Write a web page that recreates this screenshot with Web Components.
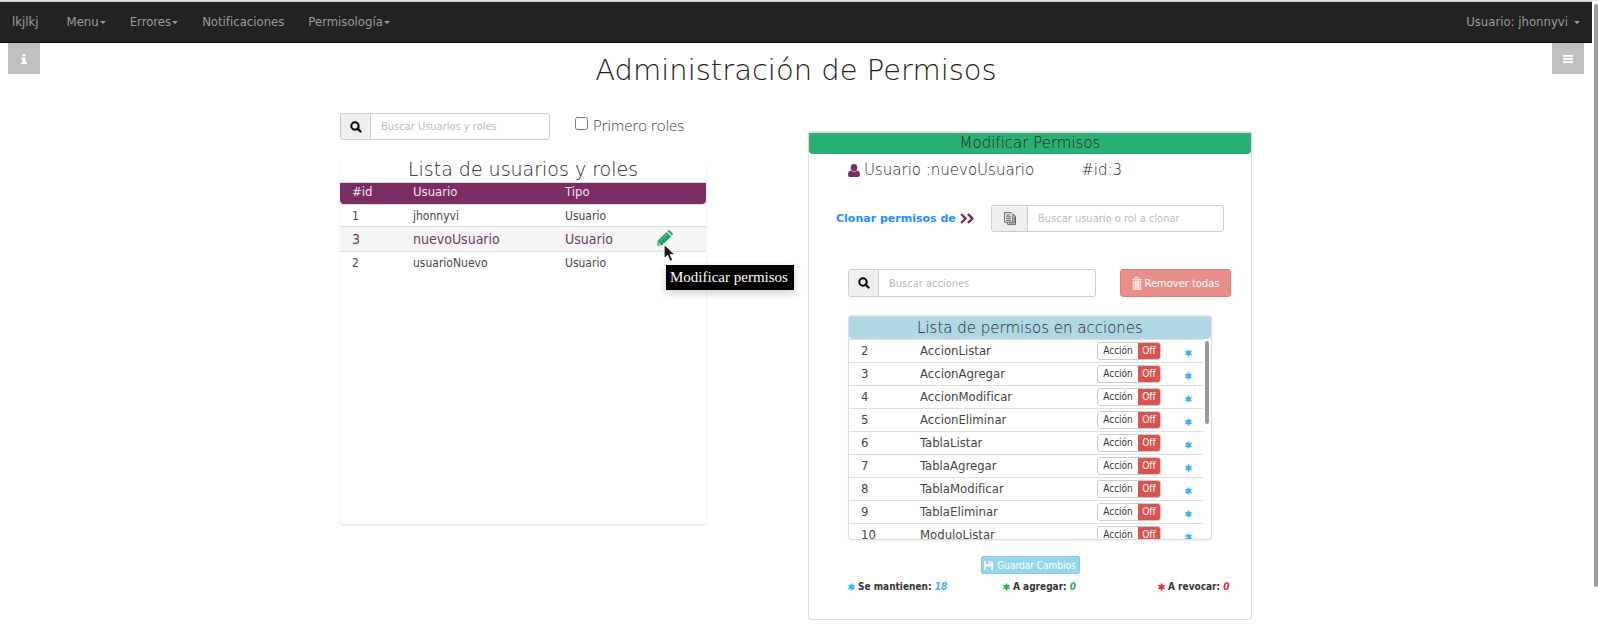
<!DOCTYPE html>
<html lang="es">
<head>
<meta charset="utf-8">
<title>Administración de Permisos</title>
<style>
html, body { margin: 0; }
body { font: 13px/20px "DejaVu Sans Condensed", "DejaVu Sans", sans-serif; color: #444; background: #fff; }
</style>
</head>
<body>
<permisos-app></permisos-app>
<script>
const ICONS = {
  search: '<svg viewBox="0 0 12 12" width="12" height="12"><circle cx="5" cy="5" r="3.7" fill="none" stroke="currentColor" stroke-width="2"/><path d="M7.6 7.6 10.500 10.500" stroke="currentColor" stroke-width="2.4" stroke-linecap="round"/></svg>',
  info: '<svg viewBox="0 0 6 10" width="6" height="10"><path d="M1.5 0h3v2.2h-3zM.5 3.6h4v4.6H6V10H0V8.200h1.500V5.400H.5z" fill="currentColor"/></svg>',
  bars: '<svg viewBox="0 0 10 8" width="10" height="8"><path d="M0 0h10v1.700H0zM0 3.100h10v1.700H0zM0 6.200h10v1.700H0z" fill="currentColor"/></svg>',
  pencil: '<svg viewBox="0 0 16 16" width="16" height="16"><path d="M1 10.500 9.600 1.900l4.500 4.500L5.500 15 .3 15.700zM10.400 1.100 11.200.4q.8-.7 1.600 0l2.800 2.800q.7.8 0 1.600l-.8.800z" fill="#1aa866"/><path d="M3.200 10.800 10 4" stroke="#7fd0a8" stroke-width=".8"/><path d="m1.500 12.300 2.200 2.200-1.900.3z" fill="#d8f0e4"/></svg>',
  user: '<svg viewBox="0 0 12 13" width="12" height="13"><path d="M6 0a3.300 3.500 0 0 1 3.300 3.500A3.300 3.500 0 0 1 6 7.200 3.300 3.500 0 0 1 2.700 3.500 3.300 3.500 0 0 1 6 0zM3 6.500Q6 9.200 9 6.500q3 .4 3 4.300 0 2.200-2 2.200H2q-2 0-2-2.200 0-3.900 3-4.300z" fill="#7a2c64"/></svg>',
  chevrons: '<svg viewBox="0 0 14 11" width="14" height="11"><path d="m1.200 1 4.300 4.500L1.200 10M8 1l4.300 4.500L8 10" fill="none" stroke="#7a2c64" stroke-width="2.500"/></svg>',
  copy: '<svg viewBox="0 0 12 13" width="12" height="13"><path d="M3.500 10.500v1.900h8V4.200L10 2.800H9M.6.600h6.400l1.800 1.800v7.800H.6zM2.200 3h4M2.200 4.800h5M2.200 6.600h5M2.200 8.400h5M10.200 4.500v6.500H5" fill="none" stroke="#555" stroke-width=".9"/></svg>',
  trash: '<svg viewBox="0 0 10 13" width="10" height="13"><path d="M1.500 4h7v8h-7z" fill="#f3d9a8" opacity=".6"/><path d="M0 2.500h10M3.200 2V.6h3.600V2M1.200 4v8.400h7.600V4zM3.500 4.500V11.500M5 4.500V11.500M6.500 4.500V11.500" fill="none" stroke="#fff" stroke-width=".8"/></svg>',
  save: '<svg viewBox="0 0 9 9" width="9" height="9"><path d="M0 0h2v3.200h4.600V0h.9L9 1.400V9H7.500V5.500h-6V9H0zM4.600 0h1.300v2.500H4.600z" fill="#fff"/></svg>',
  star: '<svg viewBox="0 0 7 8" width="7" height="8"><path d="M3.500 .5v7M.5 2.300l6 3.400M6.500 2.300l-6 3.400" stroke="currentColor" stroke-width="1.800"/></svg>',
  cursor: '<svg viewBox="0 0 14 20" width="14" height="20"><path d="M1 1v15l3.600-3.200L7 18.500l3-1.300-2.500-5.400h5z" fill="#1a1a1a" stroke="#fff" stroke-width="1.200"/></svg>'
};
const BASE = '<style>*{box-sizing:border-box}svg{display:block}</style>';
function define(name, render) {
  customElements.define(name, class extends HTMLElement {
    connectedCallback() {
      if (this.shadowRoot) return;
      const t = document.createElement('template');
      t.innerHTML = BASE + render(this);
      this.attachShadow({ mode: 'open' }).append(t.content.cloneNode(true));
    }
  });
}

define('ui-icon', el => `
<style>:host{display:inline-block;flex:none}</style>${ICONS[el.getAttribute('name')]}`);

define('nav-bar', () => `
<style>
:host{display:block;background:#222;border-top:1px solid #c8c8c8;border-bottom:1px solid #080808}
nav{display:flex;align-items:center;height:40px;padding:0 12px}
a{color:#9d9d9d;text-decoration:none;display:flex;align-items:center;gap:1px;margin-right:24px}
.brand{margin-right:28px}
a:last-child{margin:0 0 0 auto;gap:6px}
.caret::after{content:"";border:3px solid transparent;border-top-color:#9d9d9d;border-bottom:0}
</style>
<nav><a href="#" class="brand">lkjlkj</a><a href="#" class="caret">Menu</a><a href="#" class="caret">Errores</a><a href="#">Notificaciones</a><a href="#" class="caret">Permisología</a><a href="#" class="caret">Usuario: jhonnyvi</a></nav>`);

define('corner-button', el => `
<style>
:host{display:block}
button{width:32px;height:31px;border:0;padding:0;background:#bfbfbf;color:#fff;display:grid;place-items:center}
</style>
<button aria-label="${el.getAttribute('label')}"><ui-icon name="${el.getAttribute('icon')}"></ui-icon></button>`);

define('search-field', el => `
<style>
:host{box-sizing:border-box;display:flex;height:27px;border:1px solid #ccc;border-radius:3px;overflow:hidden;background:#fff}
label{flex:none;width:var(--addon,30px);display:grid;place-items:center;background:#eee;border-right:1px solid #ccc;color:#000}
input{flex:1;min-width:0;border:0;outline:0;padding:0 10px;font:11px "DejaVu Sans Condensed","DejaVu Sans",sans-serif;color:#555;background:none}
input::placeholder{color:#bbb}
</style>
<label for="q" aria-label="${el.getAttribute('text')}"><ui-icon name="${el.getAttribute('icon') || 'search'}"></ui-icon></label>
<input id="q" type="text" placeholder="${el.getAttribute('text')}">`);

define('users-table', () => `
<style>
:host{display:block;min-height:364px;box-shadow:0 1px 2px #0002;border-radius:3px}
h2{margin:0;padding-bottom:4px;font:200 19px/18px "DejaVu Sans",sans-serif;text-align:center;color:#222}
table{width:100%;border-collapse:separate;border-spacing:0;table-layout:fixed;font-size:12px}
th,td{text-align:left;font-weight:400;border-top:1px solid #ddd;padding:0 0 0 12px;height:22px;line-height:20px}
th:nth-child(1){width:61px}th:nth-child(2){width:152px}th:nth-child(3){width:92px}
th{background:#7a2c64;color:#f2e8f0;font-size:13px;line-height:18px;padding-bottom:3px}
th:first-child{border-bottom-left-radius:4px}th:last-child{border-bottom-right-radius:4px}
.on td{height:25px;font-size:14px;color:#6b3a66;background:#f5f5f5}
.edit{position:relative}
button{display:block;border:0;padding:0;background:none}
.tip{position:absolute;left:21px;top:38px;z-index:2;width:128px;background:#000;color:#fff;font:15px/25px "Liberation Serif",serif;padding-left:4px;white-space:nowrap;box-shadow:0 3px 8px #0003}
.cursor{position:absolute;left:18px;top:16px;z-index:3}
</style>
<h2>Lista de usuarios y roles</h2>
<table>
<tr><th>#id</th><th>Usuario</th><th>Tipo</th><th></th></tr>
<tr><td>1</td><td>jhonnyvi</td><td>Usuario</td><td></td></tr>
<tr class="on"><td>3</td><td>nuevoUsuario</td><td>Usuario</td><td class="edit"><button aria-label="Editar"><ui-icon name="pencil"></ui-icon></button><ui-icon class="cursor" name="cursor"></ui-icon><div class="tip" role="tooltip">Modificar permisos</div></td></tr>
<tr><td>2</td><td>usuarioNuevo</td><td>Usuario</td><td></td></tr>
</table>`);

define('action-toggle', () => `
<style>
:host{display:block}
button{display:flex;width:64px;height:18px;padding:0;border:1px solid #ccc;border-radius:3px;overflow:hidden;background:#fff;font:10px/16px "DejaVu Sans Condensed","DejaVu Sans",sans-serif;color:#333}
span{flex:1;text-align:center}
b{width:22px;font-weight:400;background:#d9534f;color:#fff}
</style>
<button type="button" aria-pressed="false"><span>Acción</span><b>Off</b></button>`);

const ACTIONS = ['AccionListar','AccionAgregar','AccionModificar','AccionEliminar','TablaListar','TablaAgregar','TablaModificar','TablaEliminar','ModuloListar'];
define('actions-list', () => `
<style>
:host{display:block;border:1px solid #ddd;border-top-width:2px;border-radius:4px;box-shadow:0 1px 2px #0001}
h3{margin:0;background:#add8e6;border-radius:0 0 4px 4px;font:200 15px/22px "DejaVu Sans",sans-serif;text-align:center;color:#222}
.body{position:relative;height:200px;overflow:hidden;padding-right:8px}
table{width:100%;border-collapse:separate;border-spacing:0;table-layout:fixed}
td{height:23px;padding:0 0 0 12px;border-top:1px solid #ddd;line-height:20px}
td:nth-child(1){width:59px}td:nth-child(3){width:88px}td:nth-child(4){width:30px;color:#35b2ea}
td:nth-child(4) ui-icon{display:block;padding-top:3px}
.thumb{position:absolute;right:2px;top:2px;width:4px;height:83px;border-radius:2px;background:#999}
</style>
<h3>Lista de permisos en acciones</h3>
<div class="body"><table>${ACTIONS.map((a, i) => `<tr><td>${i + 2}</td><td>${a}</td><td><action-toggle></action-toggle></td><td><ui-icon name="star"></ui-icon></td></tr>`).join('')}</table><div class="thumb"></div></div>`);

define('change-count', el => `
<style>
:host{display:flex;align-items:center;gap:3px;font:bold 10px/14px "DejaVu Sans Condensed","DejaVu Sans",sans-serif;color:#333;white-space:nowrap}
ui-icon,em{color:${el.getAttribute('color')}}
</style>
<ui-icon name="star"></ui-icon><span><slot></slot> <em>${el.getAttribute('value')}</em></span>`);

define('permissions-panel', () => `
<style>
:host{box-sizing:border-box;display:block;border:1px solid #ddd;border-top-width:2px;border-radius:4px;padding-bottom:25px}
h2{margin:0;background:#2bb073;border-radius:0 0 4px 4px;font:200 15px/21px "DejaVu Sans",sans-serif;text-align:center;color:#222}
.who{display:flex;align-items:center;gap:4px;margin:6px 0 0 39px;font:200 15px/20px "DejaVu Sans",sans-serif;color:#222}
.who span:last-child{margin-left:43px}
.clone{display:flex;align-items:center;justify-content:space-between;margin:25px 27px 0}
.clone a{display:flex;align-items:center;gap:4px;color:#1e90ff;text-decoration:none;font:bold 11px/20px "DejaVu Sans",sans-serif}
.clone search-field{width:233px;--addon:36px}
.find{display:flex;gap:24px;margin:37px 20px 0 39px}
.find search-field{flex:1;height:28px}
button{display:flex;align-items:center;justify-content:center;color:#fff;padding:0;border-radius:3px;font:11px "DejaVu Sans Condensed","DejaVu Sans",sans-serif}
.remove{width:111px;gap:3px;background:#e88f8c;border:1px solid #e27c79}
actions-list{margin:18px 39px 0}
.save{width:99px;height:18px;gap:4px;margin:16px auto 0;background:#94d7ea;border:1px solid #7fcde3;font-size:10px;border-radius:2px}
.totals{display:grid;grid-template-columns:155px 155px auto;margin:6px 10px 0 39px}
</style>
<h2>Modificar Permisos</h2>
<div class="who"><ui-icon name="user"></ui-icon><span>Usuario :nuevoUsuario</span><span>#id:3</span></div>
<div class="clone"><a href="#">Clonar permisos de<ui-icon name="chevrons"></ui-icon></a><search-field icon="copy" text="Buscar usuario o rol a clonar"></search-field></div>
<div class="find"><search-field text="Buscar acciones"></search-field><button class="remove"><ui-icon name="trash"></ui-icon>Remover todas</button></div>
<actions-list></actions-list>
<button class="save"><ui-icon name="save"></ui-icon>Guardar Cambios</button>
<div class="totals"><change-count color="#35b2ea" value="18">Se mantienen:</change-count><change-count color="#2fb14a" value="0">A agregar:</change-count><change-count color="#e0243f" value="0">A revocar:</change-count></div>`);

define('permisos-app', () => `
<style>
:host{display:flex;border-top:1px solid #e4e4e4;box-sizing:border-box;min-height:100vh;overflow:hidden}
.page{flex:1;min-width:0}
.bar{flex:none;width:7px;padding:3px 1px 0 2px}
.bar div{height:583px;background:#999;border-radius:2px}
header{display:flex;justify-content:space-between;align-items:flex-start;padding:0 8px}
h1{margin:10px 0 0;font:200 29px/34px "DejaVu Sans",sans-serif;color:#222}
main{display:flex;justify-content:space-between;align-items:flex-start;max-width:912px;margin:26px auto 0}
.left{width:366px}
.filter{display:flex;align-items:center}
.filter search-field{width:210px}
.filter label{display:flex;align-items:center;gap:5px;margin-left:25px;font:300 15px/22px "Open Sans",sans-serif;color:#444;padding-bottom:3px}
.filter input{width:13px;height:13px;margin:0 0 3px}
users-table{margin-top:20px}
permissions-panel{width:444px;margin-top:18px}
</style>
<div class="page">
<nav-bar></nav-bar>
<header><corner-button icon="info" label="Información"></corner-button><h1>Administración de Permisos</h1><corner-button icon="bars" label="Opciones"></corner-button></header>
<main>
<div class="left"><div class="filter"><search-field text="Buscar Usuarios y roles"></search-field><label><input type="checkbox">Primero roles</label></div><users-table></users-table></div>
<permissions-panel></permissions-panel>
</main>
</div>
<div class="bar"><div></div></div>`);
</script>
</body>
</html>
